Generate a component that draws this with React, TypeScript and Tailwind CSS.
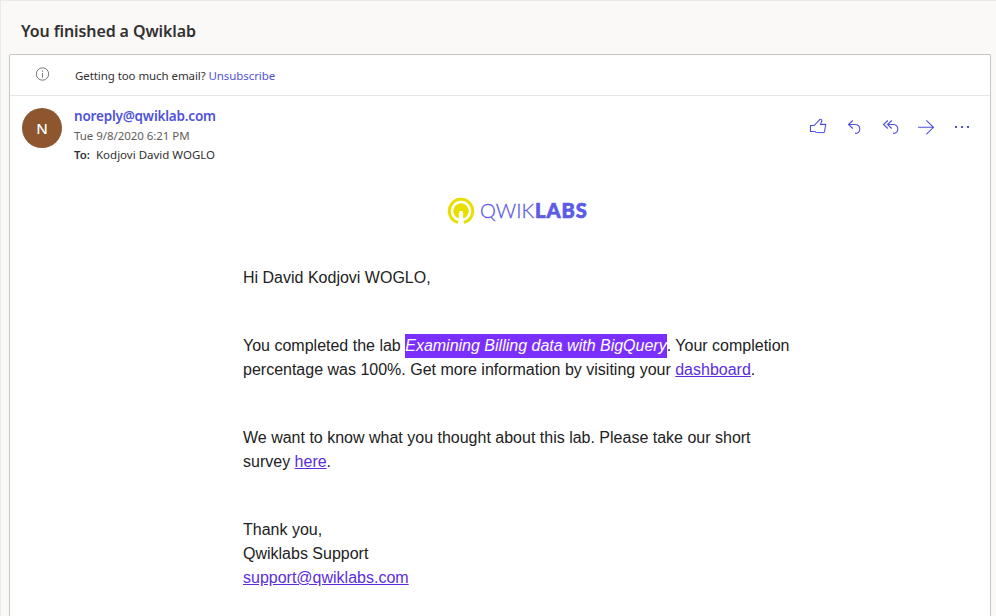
import React from "react";

function ActionIcons() {
  return (
    <svg className="mt-[7px]" width="166" height="24" viewBox="806 115 166 24" fill="none" stroke="#4f52d9" strokeWidth="1.1">
      <path d="M810.5 125.5H814.2L819.4 119.9C820.2 118.8 822.1 119.3 821.8 121L820.5 124.4H825.7L824.6 131.4C824.4 132.4 823.8 132.8 822.8 132.8L816 132.3L814.8 131.5H810.5Z" />
      <path d="M852.8 120.5L848.5 124.5L852.8 128.5M848.5 124.5H854.5C861.5 124.5 861.5 133.4 855 133.4" />
      <path d="M887.8 120.5L883.5 124.5L887.8 128.5M891.8 120.5L887.5 124.5L891.8 128.5M887.5 124.5H892.5C899.5 124.5 899.5 133.4 893 133.4" />
      <path d="M918 127.3H933.5M926.3 120.3L933.5 127.3L926.3 134.3" />
      <path d="M955 126h2v2h-2zM961 126h2v2h-2zM967 126h2v2h-2z" fill="#4f52d9" stroke="none" />
    </svg>
  );
}

function Logo() {
  return (
    <div className="flex h-[28px] items-center">
      <svg width="28" height="28" viewBox="0 0 28 28" fill="none">
        <path d="M11.2 25.4A11.7 11.7 0 1 1 16.8 25.4" stroke="#e8de00" strokeWidth="3" />
        <path d="M12.4 14V21.6A7.7 7.7 0 1 1 15.6 21.6V14Z" fill="#e8de00" />
        <path d="M12.3 16V23M15.7 16V23" stroke="#ffffff" strokeWidth="1" />
      </svg>
      <span className="mb-[2px] ml-[5px] flex whitespace-nowrap font-['Lato',sans-serif] text-[20px] leading-[28px] text-[#5b5be6]">
        <span className="w-[55px] font-light tracking-[0.1px] [-webkit-text-stroke:0.3px_#5b5be6]">QWIK</span>
        <span className="font-black tracking-[1px] [-webkit-text-stroke:0.7px_#5b5be6]">LABS</span>
      </span>
    </div>
  );
}

export default function App() {
  return (
    <div className="flex h-[616px] w-[996px] flex-col overflow-hidden border-l border-t border-[#eaeaea] bg-[#faf9f8] pl-2 pr-1 font-['Noto_Sans',sans-serif] text-[#323130]">
      <h1 className="h-[53px] whitespace-nowrap pl-3 pt-[18px] text-[16px] font-semibold leading-6 tracking-[-0.1px]">You finished a Qwiklab</h1>
      <main className="flex w-[982px] flex-1 flex-col rounded-t-[2px] border border-b-0 border-[#c8c6c4] bg-white">
        <div className="flex h-[41px] shrink-0 items-center border-b border-[#e6e6e6] pl-[26px] text-[11.5px]">
          <svg className="mb-0.5" width="14" height="14" viewBox="0 0 14 14" fill="none" stroke="#7a7876">
            <circle cx="6.5" cy="7" r="6.2" />
            <path d="M6.5 6V10.5M6.5 3.5V4.8" />
          </svg>
          <p className="ml-[25px] mt-px whitespace-nowrap tracking-[-0.08px]">
            Getting too much email? <a className="text-[#4f52d9]">Unsubscribe</a>
          </p>
        </div>
        <header className="flex h-[101px] shrink-0 items-start pl-3 pr-[18px] pt-3">
          <div className="flex size-10 items-center justify-center rounded-full bg-[#8e562e] text-[15px] font-medium text-white">N</div>
          <div className="ml-3 flex-1 whitespace-nowrap text-[11.5px]">
            <div className="h-[18px] text-[13.5px] font-semibold leading-[17px] tracking-[-0.2px] text-[#4f52d9]">noreply@qwiklab.com</div>
            <div className="h-[19px] leading-[20px] tracking-[-0.05px] text-[#605e5c]">Tue 9/8/2020 6:21 PM</div>
            <div className="flex leading-[20px]">
              <span className="w-[22px] font-semibold">To:</span>
              <span>Kodjovi David WOGLO</span>
            </div>
          </div>
          <ActionIcons />
        </header>
        <article className="pl-[233px] font-['Liberation_Sans',Arial,sans-serif] text-[16px] leading-6 text-[#222222]">
          <div className="ml-[204px]">
            <Logo />
          </div>
          <p className="mt-[41px]">Hi David Kodjovi WOGLO,</p>
          <p className="mt-11 whitespace-nowrap">
            You completed the lab <em className="inline-block h-6 bg-[#7b2fff] align-top text-white">Examining Billing data with BigQuery</em>. Your completion
            <br />
            percentage was 100%. Get more information by visiting your <a className="text-[#5c2de0] underline">dashboard</a>.
          </p>
          <p className="mt-11 whitespace-nowrap">
            We want to know what you thought about this lab. Please take our short
            <br />
            survey <a className="text-[#5c2de0] underline">here</a>.
          </p>
          <p className="mt-11 whitespace-nowrap">
            Thank you,
            <br />
            Qwiklabs Support
            <br />
            <a className="text-[#5c2de0] underline">support@qwiklabs.com</a>
          </p>
        </article>
      </main>
    </div>
  );
}
